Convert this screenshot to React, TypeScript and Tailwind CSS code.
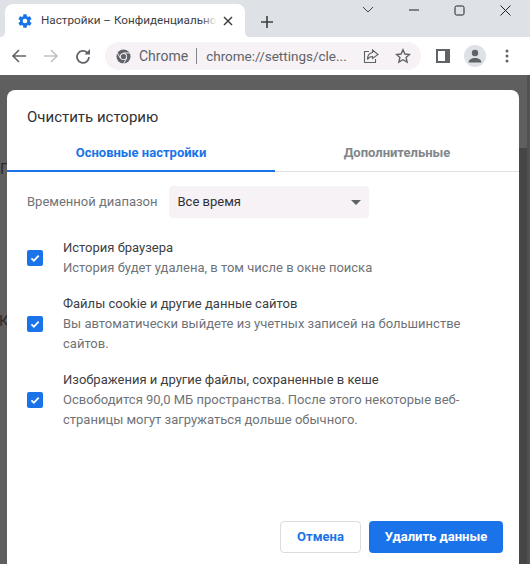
const font = "font-['Roboto','Noto_Sans',sans-serif]";

function Gear() {
  return (
    <svg width="16" height="16" viewBox="0 0 24 24" fill="#1a73e8" className="shrink-0">
      <path d="M19.4 13c.04-.33.07-.66.07-1s-.03-.67-.07-1l2.1-1.65a.5.5 0 0 0 .12-.64l-2-3.46a.5.5 0 0 0-.6-.22l-2.49 1a7.3 7.3 0 0 0-1.69-.98l-.38-2.65A.49.49 0 0 0 14 2h-4a.49.49 0 0 0-.49.42l-.38 2.65c-.61.25-1.17.59-1.69.98l-2.49-1a.5.5 0 0 0-.6.22l-2 3.46a.5.5 0 0 0 .12.64L4.57 11c-.04.33-.07.67-.07 1s.03.67.07 1l-2.1 1.65a.5.5 0 0 0-.12.64l2 3.46c.12.22.39.3.6.22l2.49-1c.52.4 1.08.73 1.69.98l.38 2.65c.03.24.24.42.49.42h4c.25 0 .46-.18.49-.42l.38-2.65c.61-.25 1.17-.59 1.69-.98l2.49 1c.23.09.49 0 .6-.22l2-3.46a.5.5 0 0 0-.12-.64L19.4 13zM12 15.500a3.500 3.500 0 1 1 0-7 3.500 3.500 0 0 1 0 7z" />
    </svg>
  );
}

function Check() {
  return (
    <span className="flex h-4 w-4 shrink-0 items-center justify-center rounded-[2px] bg-[#1a73e8]">
      <svg width="12" height="12" viewBox="0 0 12 12" fill="none" stroke="#fff" strokeWidth="1.7">
        <path d="M2.400 6.300 4.900 8.700 9.700 3.600" />
      </svg>
    </span>
  );
}

function Row({ title, lines, mt }: { title: string; lines: string[]; mt: string }) {
  return (
    <div className={`flex items-center ${mt}`}>
      <Check />
      <div className="ml-[20px]">
        <div className="text-[13px] leading-[20px] text-[#3c4043]">{title}</div>
        {lines.map((l) => (
          <div key={l} className="text-[13px] leading-[20px] text-[#6f7377]">{l}</div>
        ))}
      </div>
    </div>
  );
}

export default function App() {
  return (
    <div className={`flex h-[564px] w-[530px] flex-col overflow-hidden bg-white ${font}`}>
      {/* tab strip */}
      <div className="relative flex h-[37px] shrink-0 items-end bg-[#dee1e6] pl-[5px]">
        <svg width="5" height="5" viewBox="0 0 5 5" className="absolute bottom-0 left-0" fill="#fff">
          <path d="M5 0v5H0c3 0 5-2 5-5z" />
        </svg>
        <svg width="5" height="5" viewBox="0 0 5 5" className="absolute bottom-0 left-[245px]" fill="#fff">
          <path d="M0 0v5h5C2 5 0 3 0 0z" />
        </svg>
        <div className="relative flex h-[33px] w-[240px] items-center rounded-t-[8px] bg-white pl-[12px] pr-[11px]">
          <Gear />
          <div className="relative ml-[8px] w-[176px] shrink-0 whitespace-nowrap text-[11.700px] text-[#3c4043]">
            Настройки – Конфиденциально
            <span className="absolute inset-y-0 right-0 w-[16px] bg-gradient-to-r from-transparent to-white" />
          </div>
          <svg width="10" height="10" viewBox="0 0 10 10" stroke="#3c4043" strokeWidth="1.500" className="ml-[6px] shrink-0">
            <path d="M1 1l8 8M9 1l-8 8" />
          </svg>
        </div>
        <svg width="14" height="14" viewBox="0 0 14 14" stroke="#3c4043" strokeWidth="1.600" className="mb-[8px] ml-[15px]">
          <path d="M7 1v12M1 7h12" />
        </svg>
        <div className="ml-auto flex h-[37px] items-start">
          <svg width="12" height="8" viewBox="0 0 12 8" fill="none" stroke="#3c4043" className="mr-[34px] mt-[6px]">
            <path d="M1 1 6 6l5-5" />
          </svg>
          <svg width="12" height="2" viewBox="0 0 12 2" stroke="#202124" className="mr-[34px] mt-[9px]">
            <path d="M1 1h10" />
          </svg>
          <svg width="11" height="11" viewBox="0 0 11 11" fill="none" stroke="#202124" className="mr-[35px] mt-[5px]">
            <rect x="1" y="1" width="9" height="9" rx="1.500" />
          </svg>
          <svg width="11" height="11" viewBox="0 0 11 11" stroke="#202124" className="mr-[19px] mt-[5px]">
            <path d="M.5.5l10 10M10.500.5l-10 10" />
          </svg>
        </div>
      </div>
      {/* toolbar */}
      <div className="flex h-[38px] shrink-0 items-center bg-white">
        <svg width="16" height="16" viewBox="0 0 16 16" fill="none" stroke="#5f6368" strokeWidth="1.600" className="ml-[11px]">
          <path d="M15 8H2M8 2 2 8l6 6" />
        </svg>
        <svg width="16" height="16" viewBox="0 0 16 16" fill="none" stroke="#bdc1c6" strokeWidth="1.600" className="ml-[16px]">
          <path d="M1 8H14M8 2l6 6-6 6" />
        </svg>
        <svg width="16" height="16" viewBox="0 0 16 16" fill="none" stroke="#5f6368" strokeWidth="1.800" className="ml-[16px]">
          <path d="M14 9a6 6 0 1 1-1.800-4.400" />
          <path d="M15 1v5.500H9.500z" fill="#5f6368" stroke="none" />
        </svg>
        <div className="ml-[14px] flex h-[28px] w-[316px] items-center rounded-full bg-[#f6f2f6] pl-[11px]">
          <svg width="15" height="15" viewBox="0 0 16 16" className="shrink-0">
            <circle cx="8" cy="8" r="7.500" fill="#5f6368" />
            <circle cx="8" cy="8" r="3.800" fill="#f6f2f6" />
            <circle cx="8" cy="8" r="2.800" fill="#5f6368" />
            <path d="M8 4.200h6.800M4.700 9.900 1.300 4M11.300 9.900 7.900 15.800" stroke="#f6f2f6" strokeWidth="1" fill="none" />
          </svg>
          <span className="ml-[8px] text-[14px] text-[#5f6368]">Chrome</span>
          <span className="ml-[8px] h-[16px] w-px bg-[#80868b]" />
          <span className="ml-[9px] w-[143px] shrink-0 whitespace-nowrap text-[13.500px] text-[#5f6368]">chrome://settings/cle...</span>
          <svg width="16" height="16" viewBox="0 0 16 16" fill="none" stroke="#5f6368" strokeWidth="1.100" className="ml-[14px] shrink-0">
            <path d="M6 3.500H1.500V14.500H12.500V11" />
            <path d="M9.500 2 15 6.500 9.500 10.500V8.500C7 8.500 5.500 9.500 4.500 11.500 4.500 8 6 5 9.500 4.500z" />
          </svg>
          <svg width="16" height="16" viewBox="0 0 16 16" fill="none" stroke="#5f6368" strokeWidth="1.400" className="ml-[16px] shrink-0">
            <path d="M8 1.800 9.900 6l4.600.5-3.400 3 1 4.500L8 11.700 3.900 14l1-4.500-3.400-3L6.100 6z" />
          </svg>
        </div>
        <svg width="14" height="14" viewBox="0 0 14 14" className="ml-[15px] shrink-0">
          <path fill="#5f6368" fillRule="evenodd" d="M0 0h14v14H0zM2 2v10h7V2z" />
        </svg>
        <div className="ml-[14px] flex h-[22px] w-[22px] shrink-0 items-center justify-center rounded-full bg-[#dee1e6]">
          <svg width="14" height="14" viewBox="0 0 14 14" fill="#5f6368">
            <circle cx="7" cy="4" r="3.200" />
            <path d="M.6 13.500c0-3 3-4.500 6.400-4.500s6.400 1.500 6.400 4.500z" />
          </svg>
        </div>
        <svg width="4" height="14" viewBox="0 0 4 14" fill="#5f6368" className="ml-[19px] shrink-0">
          <circle cx="2" cy="2" r="1.500" />
          <circle cx="2" cy="7" r="1.500" />
          <circle cx="2" cy="12" r="1.500" />
        </svg>
      </div>
      {/* backdrop */}
      <div className="relative flex-1 overflow-hidden bg-[#5f5f5f] pl-[7px] pr-[11px] pt-[15px]">
        <span className="absolute left-0 top-[83px] text-[15px] leading-[22px] text-[#2a2a2a]">Г</span>
        <span className="absolute left-[-1px] top-[235px] text-[15px] leading-[22px] text-[#2a2a2a]">К</span>
        {/* page scrollbar behind the dialog */}
        <div className="absolute bottom-0 right-[3px] top-[73px] w-[8px] bg-[#464646]" />
        <div className="absolute bottom-0 right-[1px] top-0 w-[2px] bg-[#505050]" />
        <div className="absolute bottom-0 right-0 top-0 w-px bg-[#34607f]" />
        <div className="relative h-[500px] rounded-t-[8px] bg-white">
          <div className="pl-[20px] pt-[17px] text-[15px] leading-[20px] text-[#303134]">Очистить историю</div>
          <div className="mt-[8px] flex h-[37px] border-b-[1px] border-[#dfe1e5]">
            <div className="-mb-[1px] flex w-[268px] items-center justify-center border-b-[2px] border-[#1a73e8] text-[13px] font-bold text-[#1a73e8]">Основные настройки</div>
            <div className="flex flex-1 items-center justify-center text-[13px] font-bold text-[#80868b]">Дополнительные</div>
          </div>
          <div className="mt-[14px] flex items-center pl-[20px]">
            <span className="text-[13px] text-[#6f7377]">Временной диапазон</span>
            <div className="ml-[12px] flex h-[32px] w-[200px] items-center justify-between rounded-[4px] bg-[#f6f2f6] pl-[8px] pr-[8px]">
              <span className="text-[13px] text-[#303134]">Все время</span>
              <span className="h-0 w-0 border-x-[5px] border-t-[5px] border-x-transparent border-t-[#5f6368]" />
            </div>
          </div>
          <div className="pl-[20px]">
            <Row mt="mt-[20px]" title="История браузера" lines={["История будет удалена, в том числе в окне поиска"]} />
            <Row mt="mt-[16px]" title="Файлы cookie и другие данные сайтов" lines={["Вы автоматически выйдете из учетных записей на большинстве", "сайтов."]} />
            <Row mt="mt-[16px]" title="Изображения и другие файлы, сохраненные в кеше" lines={["Освободится 90,0 МБ пространства. После этого некоторые веб-", "страницы могут загружаться дольше обычного."]} />
          </div>
          <div className="mt-[91px] flex justify-end gap-[8px] pr-[16px]">
            <button className="h-[32px] w-[81px] rounded-[4px] border border-[#dadce0] bg-white text-[13px] font-bold text-[#1a73e8]">Отмена</button>
            <button className="h-[32px] w-[134px] rounded-[4px] bg-[#1a73e8] text-[13px] font-bold text-white">Удалить данные</button>
          </div>
        </div>
      </div>
    </div>
  );
}
